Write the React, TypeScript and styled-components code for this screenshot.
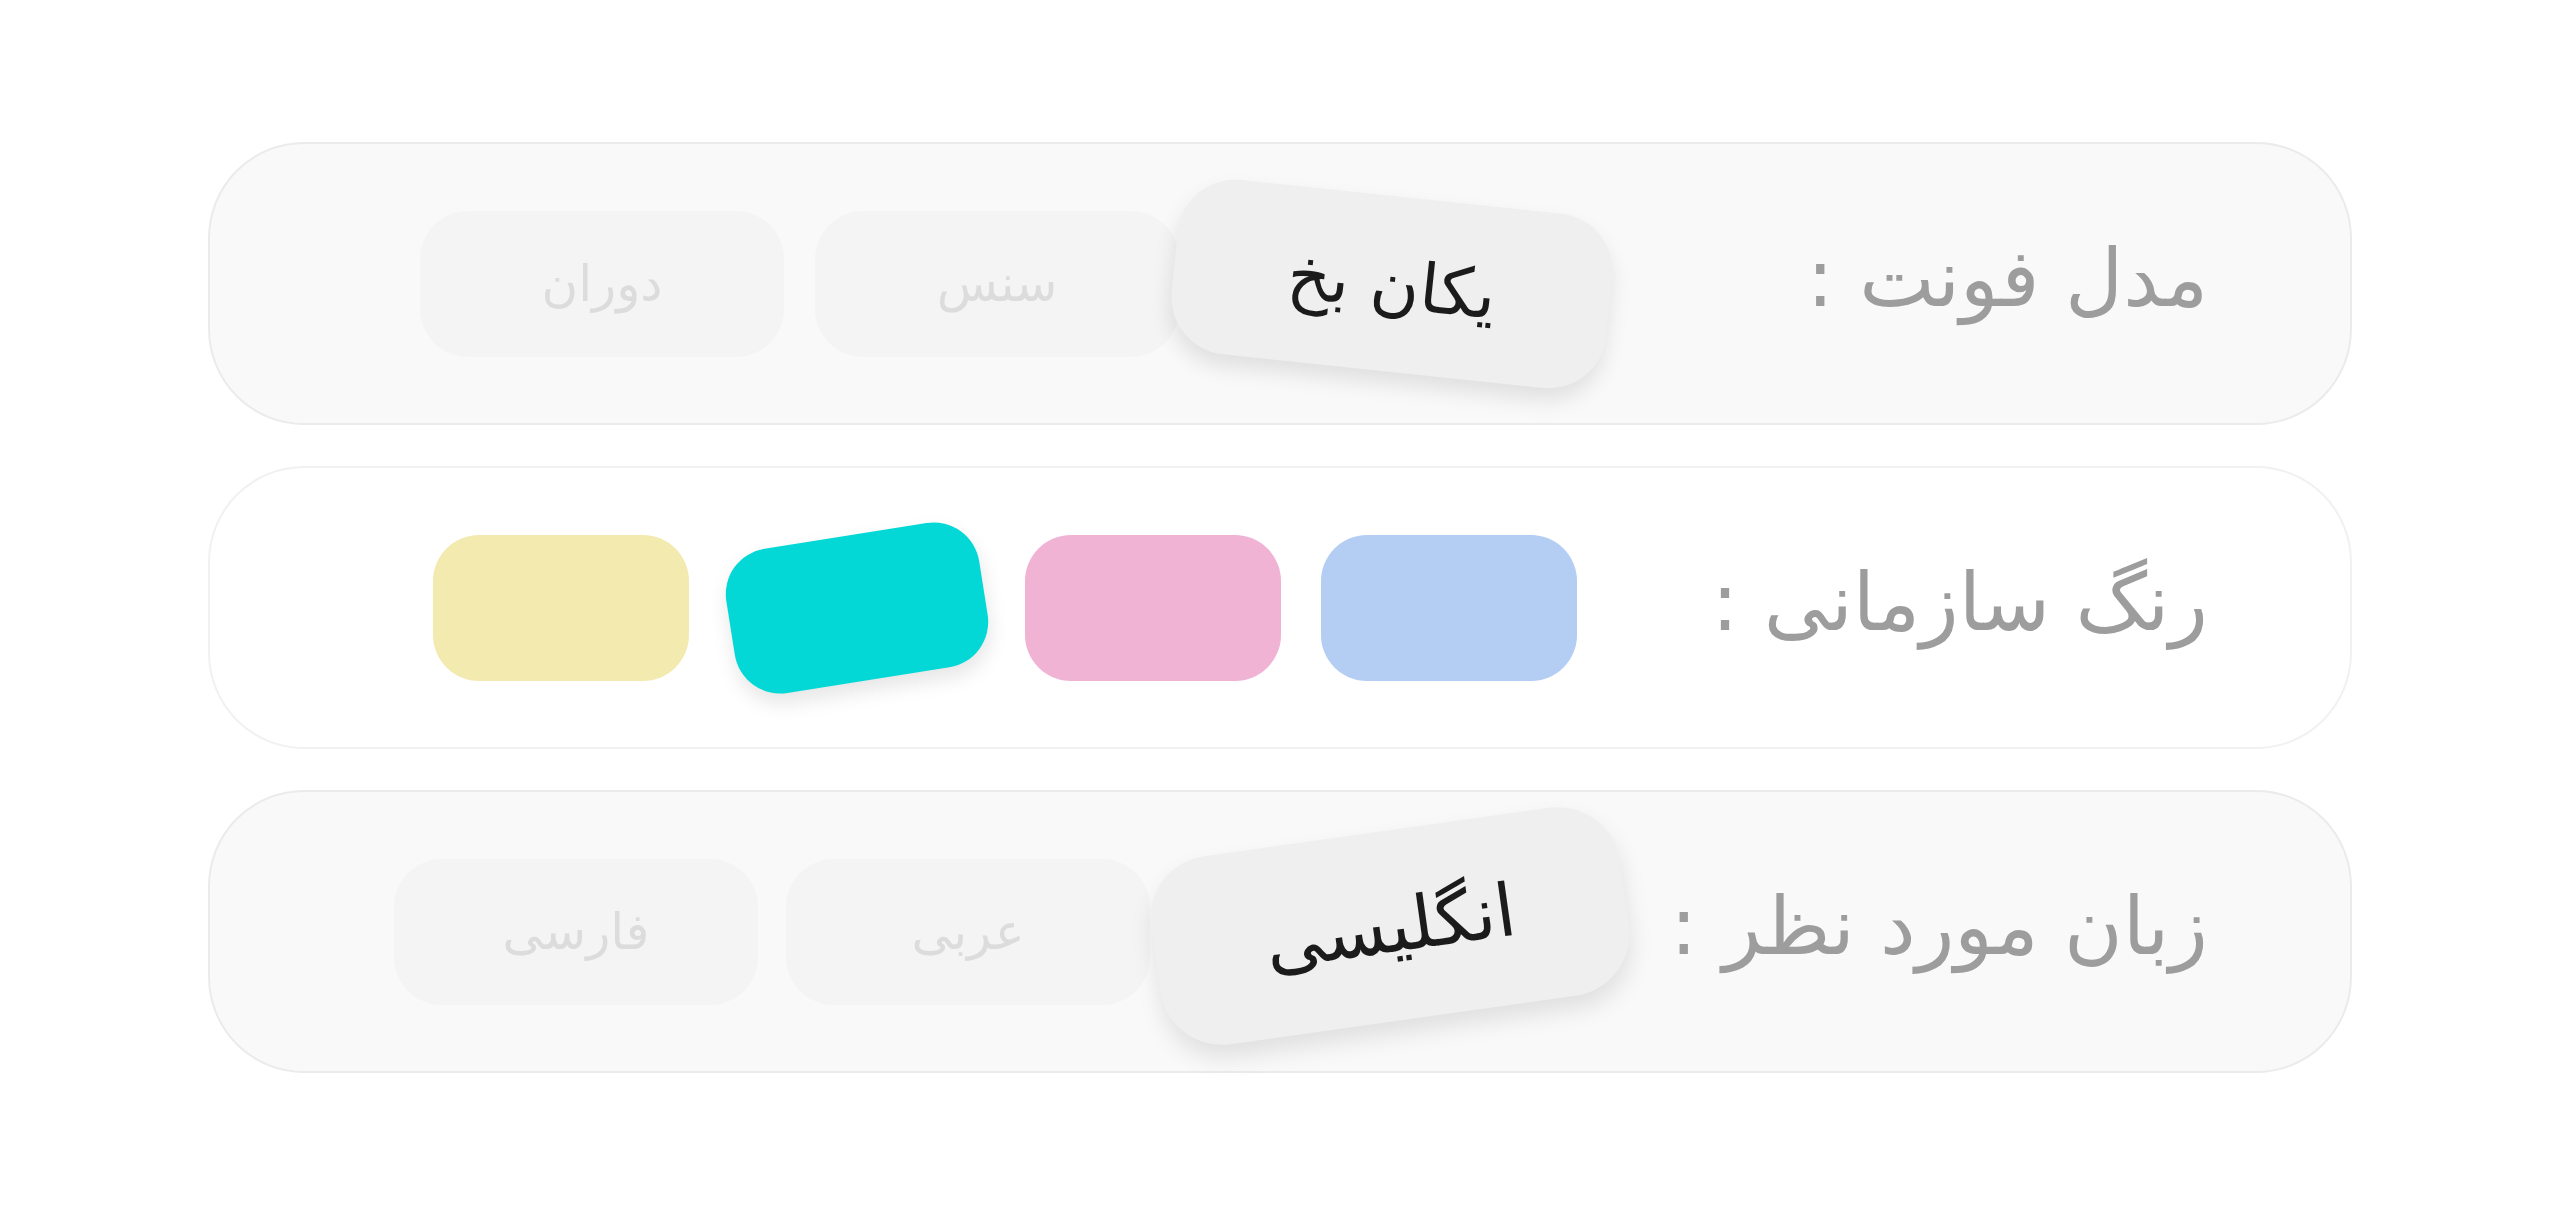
import styled, { createGlobalStyle } from 'styled-components'

const GlobalStyle = createGlobalStyle`
  html, body {
    margin: 0;
    padding: 0;
    background: #ffffff;
  }
  body {
    font-family: 'DejaVu Sans', 'Noto Sans', sans-serif;
  }
`

const Page = styled.main`
  direction: rtl;
  display: flex;
  flex-direction: column;
  align-items: center;
  gap: 41px;
  padding-top: 142px;
  min-height: 1210px;
  box-sizing: border-box;
`

const Panel = styled.section<{ $plain?: boolean; $inset: number }>`
  width: 2144px;
  height: 283px;
  box-sizing: border-box;
  display: flex;
  align-items: center;
  justify-content: space-between;
  padding-inline-start: 142px;
  padding-inline-end: ${(p) => p.$inset}px;
  border-radius: 96px;
  border: 2px solid ${(p) => (p.$plain ? '#f1f1f1' : '#ebebeb')};
  background: ${(p) => (p.$plain ? '#ffffff' : '#f9f9f9')};
`

const Label = styled.h2`
  margin: 0 0 10px;
  font-size: 80px;
  font-weight: 400;
  color: #9d9d9d;
  white-space: nowrap;
`

const Options = styled.div<{ $gap: number }>`
  display: flex;
  align-items: center;
  gap: ${(p) => p.$gap}px;
`

const Chip = styled.button<{ $active?: boolean; $transform?: string }>`
  width: 364px;
  height: 146px;
  border: none;
  border-radius: 48px;
  display: flex;
  align-items: center;
  justify-content: center;
  font-family: inherit;
  font-size: ${(p) => (p.$active ? 56 : 50)}px;
  padding: 0;
  background: ${(p) => (p.$active ? '#efefef' : '#f4f4f4')};
  color: ${(p) => (p.$active ? '#1b1b1b' : '#dcdcdc')};
  box-shadow: ${(p) =>
    p.$active ? '0 10px 18px rgba(0, 0, 0, 0.10)' : 'none'};
  transform: ${(p) => p.$transform || 'none'};
  position: relative;
  z-index: ${(p) => (p.$active ? 1 : 0)};
`

const Swatch = styled.span<{ $color: string; $active?: boolean }>`
  display: block;
  width: 256px;
  height: 146px;
  border-radius: 46px;
  background: ${(p) => p.$color};
  box-shadow: ${(p) =>
    p.$active ? '0 10px 20px rgba(0, 0, 0, 0.10)' : 'none'};
  transform: ${(p) => (p.$active ? 'rotate(-9deg)' : 'none')};
`

const fonts = ['یکان بخ', 'سنس', 'دوران']
const colors = ['#b3cdf3', '#f1b3d4', '#03d8d6', '#f3eab0']
const languages = ['انگلیسی', 'عربی', 'فارسی']

export default function App() {
  return (
    <>
      <GlobalStyle />
      <Page>
        <Panel $inset={210}>
          <Label>مدل فونت :</Label>
          <Options $gap={31}>
            {fonts.map((f, i) => (
              <Chip
                key={f}
                $active={i === 0}
                $transform={i === 0 ? 'rotate(6deg) scale(1.2)' : undefined}
              >
                {f}
              </Chip>
            ))}
          </Options>
        </Panel>

        <Panel $plain $inset={223}>
          <Label>رنگ سازمانی :</Label>
          <Options $gap={40}>
            {colors.map((c, i) => (
              <Swatch key={c} $color={c} $active={i === 2} />
            ))}
          </Options>
        </Panel>

        <Panel $inset={184}>
          <Label>زبان مورد نظر :</Label>
          <Options $gap={28}>
            {languages.map((l, i) => (
              <Chip
                key={l}
                $active={i === 0}
                $transform={
                  i === 0
                    ? 'translate(30px, -6px) rotate(-8deg) scale(1.3)'
                    : undefined
                }
              >
                {l}
              </Chip>
            ))}
          </Options>
        </Panel>
      </Page>
    </>
  )
}
